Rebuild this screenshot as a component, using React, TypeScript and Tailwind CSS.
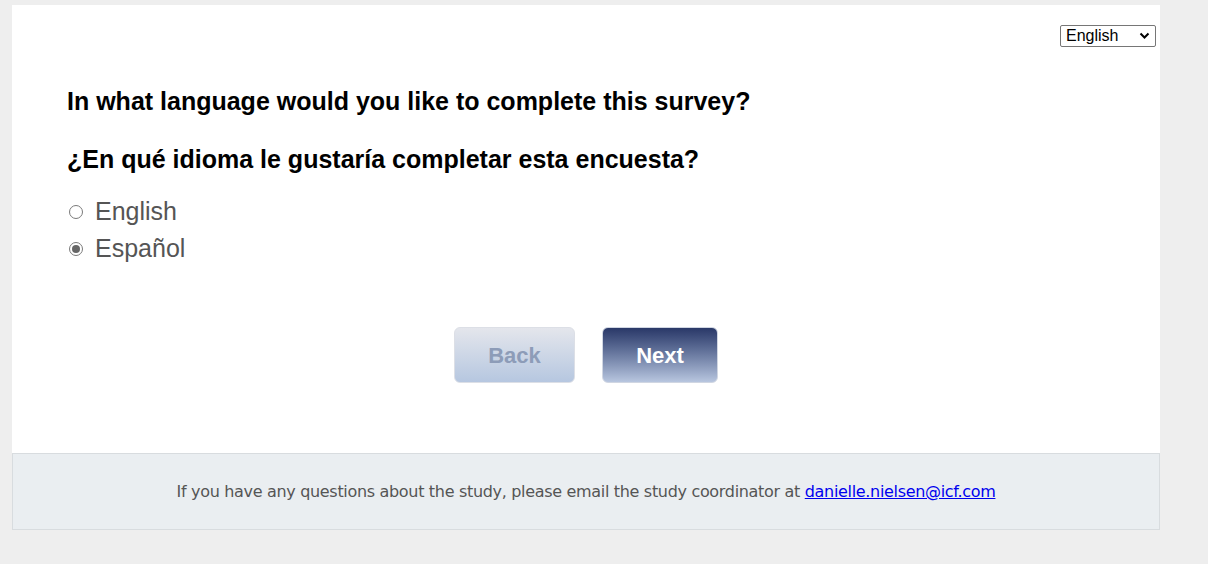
import React from "react";

export default function App() {
  return (
    <div className="min-h-[564px] bg-[#eeeeee] pt-[5px] pl-[12px]" style={{ fontFamily: "'Liberation Sans', Arial, sans-serif" }}>
      <div className="w-[1148px]">
        <div className="bg-white h-[448px] flex flex-col">
          <div className="flex justify-end pt-[19px] pr-[4px]">
            <div className="relative w-[96px] h-[22px]">
              <select className="w-[96px] h-[22px] border border-[#767676] rounded-[2px] text-[16px] leading-[20px] text-black bg-white pl-[5px] appearance-none" defaultValue="English">
                <option>English</option>
                <option>Español</option>
              </select>
              <svg className="absolute right-[6px] top-[8px] pointer-events-none" width="11" height="8" viewBox="0 0 11 8">
                <path d="M1.5 1.5 L5.5 5.5 L9.5 1.5" fill="none" stroke="#000" strokeWidth="2" />
              </svg>
            </div>
          </div>
          <div className="pl-[55px] pt-[41px]">
            <h1 className="text-[25px] font-bold text-black leading-[29px]">In what language would you like to complete this survey?</h1>
            <h2 className="text-[25px] font-bold text-black leading-[29px] mt-[29px]">¿En qué idioma le gustaría completar esta encuesta?</h2>
            <div className="mt-[23px] flex flex-col gap-[8px]">
              <label className="flex items-center h-[29px]">
                <span className="w-[14px] h-[14px] rounded-full border border-[#7a7a7a] bg-white ml-[2px]"></span>
                <span className="ml-[12px] text-[25px] leading-[29px] text-[#555555]">English</span>
              </label>
              <label className="flex items-center h-[29px]">
                <span className="w-[14px] h-[14px] rounded-full border border-[#7a7a7a] bg-white ml-[2px] flex items-center justify-center">
                  <span className="w-[8px] h-[8px] rounded-full bg-[#666666]"></span>
                </span>
                <span className="ml-[12px] text-[25px] leading-[29px] text-[#555555]">Español</span>
              </label>
            </div>
          </div>
          <div className="flex justify-center gap-[27px] mt-[64px]">
            <button className="w-[121px] h-[56px] rounded-[6px] border border-[#dcdfe6] bg-gradient-to-b from-[#e4e6ec] to-[#b6c7e0] text-[22px] font-bold text-[#8d9cb8]">Back</button>
            <button className="w-[116px] h-[56px] rounded-[6px] border border-[#d0d6e2] bg-gradient-to-b from-[#2a3868] to-[#b8c6df] text-[22px] font-bold text-white">Next</button>
          </div>
        </div>
        <div className="h-[77px] bg-[#eaeef1] border border-[#d8dcdf] flex items-center justify-center text-[16px] text-[#555555]" style={{ fontFamily: "'DejaVu Sans', Tahoma, sans-serif" }}>
          <span className="tracking-[-0.32px]">If you have any questions about the study, please email the study coordinator at <a href="#" className="text-[#0000ee] underline">danielle.nielsen@icf.com</a></span>
        </div>
      </div>
    </div>
  );
}
